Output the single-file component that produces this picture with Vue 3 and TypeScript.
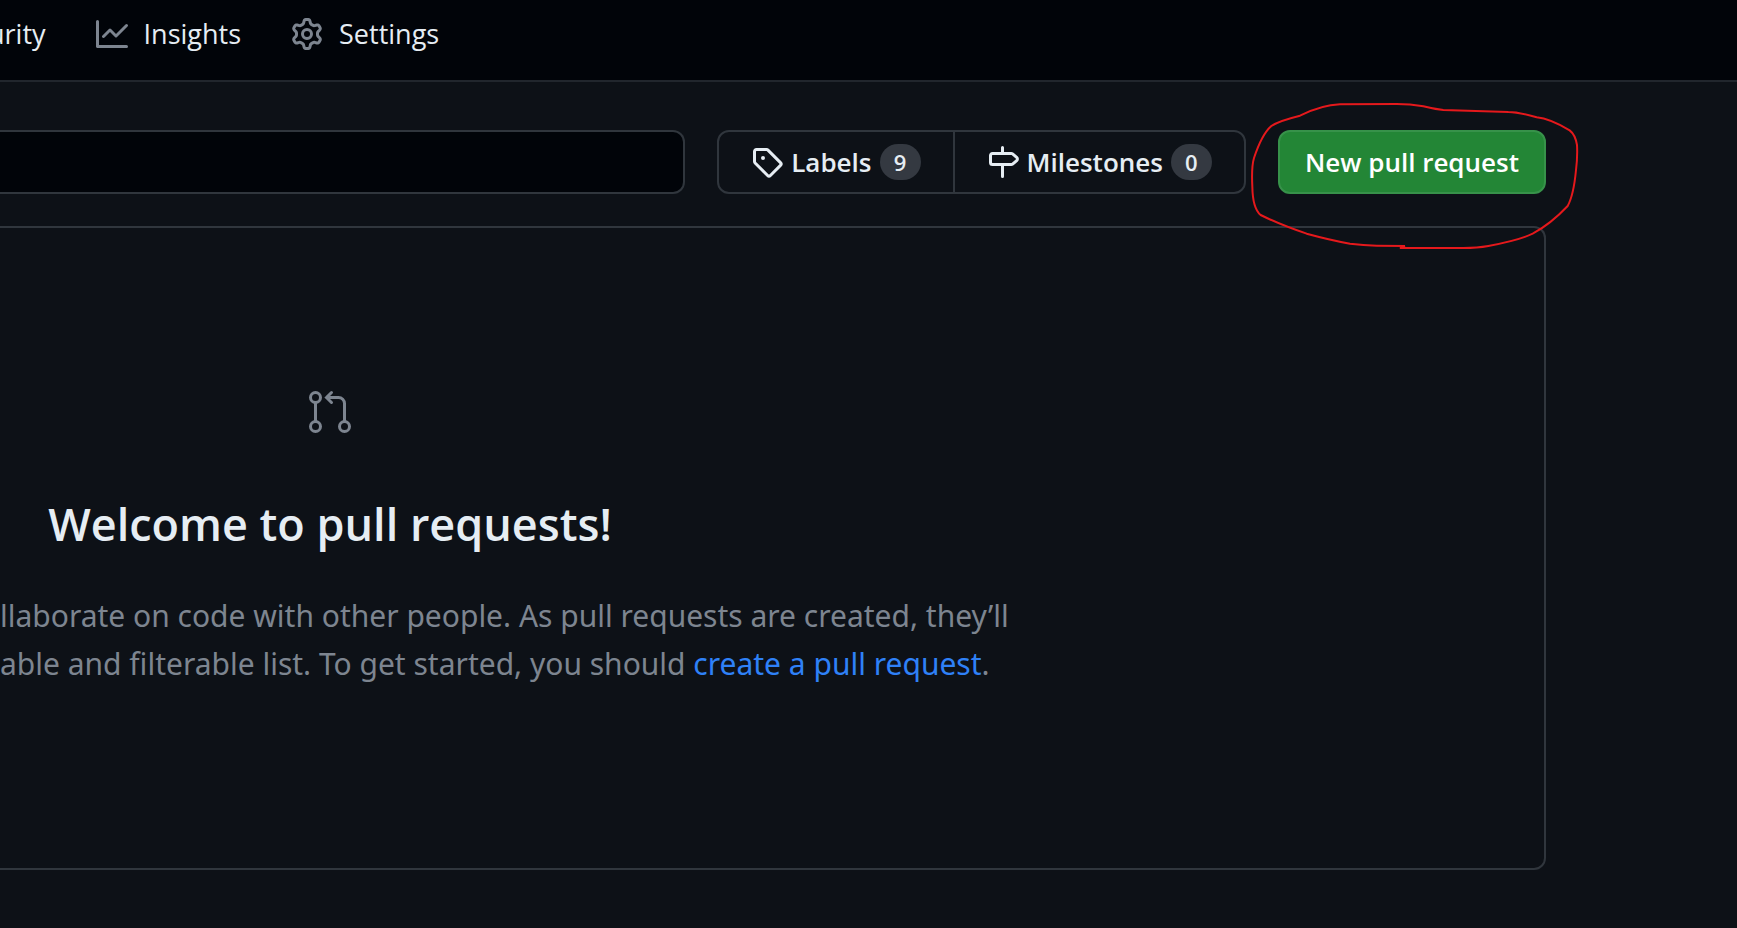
<script setup lang="ts">
import { ref } from 'vue'

interface NavItem {
  label: string
  icon?: string
}

interface Filter {
  label: string
  count: number
  icon: string
}

const graphIcon =
  'M1.5 1.75a.75.75 0 00-1.5 0v12.5c0 .414.336.75.75.75h14.5a.75.75 0 000-1.5H1.5V1.75zm14.28 2.53a.75.75 0 00-1.06-1.06L10 7.94 7.53 5.47a.75.75 0 00-1.06 0L3.22 8.72a.75.75 0 001.06 1.06L7 7.06l2.47 2.47a.75.75 0 001.06 0l5.25-5.25z'
const gearIcon =
  'M7.429 1.525a6.593 6.593 0 011.142 0c.036.003.108.036.137.146l.289 1.105c.147.56.55.967.997 1.189.174.086.341.183.501.29.417.278.97.423 1.53.27l1.102-.303c.11-.03.175.016.195.046.219.31.41.641.573.989.014.031.022.11-.059.19l-.815.806c-.411.406-.562.957-.53 1.456a4.588 4.588 0 010 .582c-.032.499.119 1.05.53 1.456l.815.806c.08.08.073.159.059.19a6.494 6.494 0 01-.573.99c-.02.029-.086.074-.195.045l-1.103-.303c-.559-.153-1.112-.008-1.529.27-.16.107-.327.204-.5.29-.449.222-.851.628-.998 1.189l-.289 1.105c-.029.11-.101.143-.137.146a6.613 6.613 0 01-1.142 0c-.036-.003-.108-.037-.137-.146l-.289-1.105c-.147-.56-.55-.967-.997-1.189a4.502 4.502 0 01-.501-.29c-.417-.278-.97-.423-1.53-.27l-1.102.303c-.11.03-.175-.016-.195-.046a6.492 6.492 0 01-.573-.989c-.014-.031-.022-.11.059-.19l.815-.806c.411-.406.562-.957.53-1.456a4.587 4.587 0 010-.582c.032-.499-.119-1.05-.53-1.456l-.815-.806c-.08-.08-.073-.159-.059-.19a6.44 6.44 0 01.573-.99c.02-.029.086-.075.195-.045l1.103.303c.559.153 1.112.008 1.529-.27.16-.107.327-.204.5-.29.449-.222.851-.628.998-1.189l.289-1.105c.029-.11.101-.143.137-.146zM8 0c-.236 0-.47.01-.701.03-.743.065-1.29.615-1.458 1.261l-.29 1.106c-.017.066-.078.158-.211.224a5.994 5.994 0 00-.668.386c-.123.082-.233.09-.3.071L3.27 2.776c-.644-.177-1.392.02-1.82.63a7.977 7.977 0 00-.704 1.217c-.315.675-.111 1.422.363 1.891l.815.806c.05.048.098.147.088.294a6.084 6.084 0 000 .772c.01.147-.038.246-.088.294l-.815.806c-.474.469-.678 1.216-.363 1.891.2.428.436.835.704 1.218.428.609 1.176.806 1.82.63l1.103-.303c.066-.019.176-.011.299.071.213.143.436.272.668.386.133.066.194.158.212.224l.289 1.106c.169.646.715 1.196 1.458 1.26a8.094 8.094 0 001.402 0c.743-.064 1.29-.614 1.458-1.26l.29-1.106c.017-.066.078-.158.211-.224a5.98 5.98 0 00.668-.386c.123-.082.233-.09.3-.071l1.102.302c.644.177 1.392-.02 1.82-.63.268-.382.505-.789.704-1.217.315-.675.111-1.422-.364-1.891l-.814-.806c-.05-.048-.098-.147-.088-.294a6.1 6.1 0 000-.772c-.01-.147.039-.246.088-.294l.814-.806c.475-.469.679-1.216.364-1.891a7.992 7.992 0 00-.704-1.218c-.428-.609-1.176-.806-1.82-.63l-1.103.303c-.066.019-.176.011-.299-.071a5.991 5.991 0 00-.668-.386c-.133-.066-.194-.158-.212-.224L10.16 1.29C9.99.645 9.444.095 8.701.031A8.094 8.094 0 008 0zm1.5 8a1.5 1.5 0 11-3 0 1.5 1.5 0 013 0zM11 8a3 3 0 11-6 0 3 3 0 016 0z'
const tagIcon =
  'M2.5 7.775V2.75a.25.25 0 01.25-.25h5.025a.25.25 0 01.177.073l6.25 6.25a.25.25 0 010 .354l-5.025 5.025a.25.25 0 01-.354 0l-6.25-6.25a.25.25 0 01-.073-.177zm-1.5 0V2.75C1 1.784 1.784 1 2.75 1h5.025c.464 0 .91.184 1.238.513l6.25 6.25a1.75 1.75 0 010 2.474l-5.026 5.026a1.75 1.75 0 01-2.474 0l-6.25-6.25A1.75 1.75 0 011 7.775zM6 5a1 1 0 100 2 1 1 0 000-2z'
const milestoneIcon =
  'M7.75 0a.75.75 0 01.75.75V3h3.634c.414 0 .814.147 1.13.414l2.07 1.75a1.75 1.75 0 010 2.672l-2.07 1.75a1.75 1.75 0 01-1.13.414H8.5v5.25a.75.75 0 11-1.5 0V10H2.75A1.75 1.75 0 011 8.25v-3.5C1 3.784 1.784 3 2.75 3H7V.75A.75.75 0 017.75 0zm0 8.5h4.384a.25.25 0 00.161-.06l2.07-1.75a.25.25 0 000-.38l-2.07-1.75a.25.25 0 00-.161-.06H2.75a.25.25 0 00-.25.25v3.5c0 .138.112.25.25.25h5z'

const navItems: NavItem[] = [
  { label: 'urity' },
  { label: 'Insights', icon: graphIcon },
  { label: 'Settings', icon: gearIcon },
]

const filters: Filter[] = [
  { label: 'Labels', count: 9, icon: tagIcon },
  { label: 'Milestones', count: 0, icon: milestoneIcon },
]

const query = ref('')
</script>

<template>
  <div class="page">
    <header class="header">
      <nav class="nav" aria-label="Repository">
        <a v-for="item in navItems" :key="item.label" class="nav-link" href="#">
          <svg v-if="item.icon" class="icon muted" viewBox="0 0 16 16" aria-hidden="true">
            <path fill-rule="evenodd" :d="item.icon" />
          </svg>
          <span>{{ item.label }}</span>
        </a>
      </nav>
    </header>

    <main class="main">
      <div class="toolbar">
        <input v-model="query" class="search" type="text" aria-label="Search all issues" />
        <div class="filters">
          <a v-for="filter in filters" :key="filter.label" class="filter" href="#">
            <svg class="icon" viewBox="0 0 16 16" aria-hidden="true">
              <path fill-rule="evenodd" :d="filter.icon" />
            </svg>
            <span>{{ filter.label }}</span>
            <span class="count">{{ filter.count }}</span>
          </a>
        </div>
        <div class="create">
          <button class="create-button" type="button">New pull request</button>
          <svg class="scribble" viewBox="0 0 1110 510" aria-hidden="true">
            <path
              d="M525 468 L512 474 L700 474 Q742 474 775 468 Q870 450 908 431 Q962 402 1013 348 Q1031 315 1038 240 Q1043 200 1041 165 Q1036 134 1019 121 Q960 86 920 82 Q865 66 835 66 L640 60 Q610 57 580 49 Q540 42 500 42 L330 43 Q275 45 210 77 Q145 93 124 108 Q96 132 72 204 Q64 230 67 290 Q68 355 92 375 Q150 404 230 431 Q300 450 360 461 Q400 466 440 467 L525 468"
            />
          </svg>
        </div>
      </div>

      <section class="blankslate">
        <div class="intro">
          <svg class="pull-icon" viewBox="0 0 24 24" aria-hidden="true">
            <circle cx="4.75" cy="4.75" r="2.5" />
            <circle cx="4.75" cy="19.25" r="2.5" />
            <circle cx="19.25" cy="19.25" r="2.5" />
            <path d="M4.75 7.25v9.5M19.25 16.75V7.75a3 3 0 0 0-3-3h-6M12.75 2.25l-2.5 2.5 2.5 2.5" />
          </svg>
          <h1 class="title">Welcome to pull requests!</h1>
        </div>
        <p class="description">
          llaborate on code with other people. As pull requests are created, they’ll<br />
          able and filterable list. To get started, you should
          <a class="link" href="#">create a pull request</a>.
        </p>
      </section>
    </main>
  </div>
</template>

<style>
body {
  margin: 0;
  background: #0d1117;
}
</style>

<style scoped>
.page {
  min-height: 100vh;
  overflow: hidden;
  background: #0d1117;
  color: #e6edf3;
  font-family: 'Open Sans', 'Noto Sans', sans-serif;
  font-size: 26px;
  line-height: 40px;
}

.header {
  padding: 14px 0 26px;
  border-bottom: 2px solid #21262d;
  background: #010409;
}

.nav {
  display: flex;
  gap: 50px;
  margin-left: -12px;
  font-size: 27px;
}

.nav-link {
  display: flex;
  align-items: center;
  gap: 16px;
  color: inherit;
  text-decoration: none;
}

.icon {
  flex: none;
  width: 32px;
  height: 32px;
  fill: currentColor;
}

.muted {
  color: #7d8590;
}

.main {
  padding: 48px 191px 59px 0;
}

.toolbar {
  display: flex;
  gap: 32px;
  margin-bottom: 32px;
}

.search {
  flex: 1;
  min-width: 0;
  box-sizing: border-box;
  height: 64px;
  padding: 0 24px;
  border: 2px solid #30363d;
  border-left: 0;
  border-radius: 0 12px 12px 0;
  background: #010409;
  color: inherit;
  font: inherit;
}

.filters {
  display: flex;
  box-sizing: border-box;
  height: 64px;
  border: 2px solid #30363d;
  border-radius: 12px;
  font-weight: 600;
}

.filter {
  display: flex;
  align-items: center;
  gap: 8px;
  padding: 0 32px;
  color: inherit;
  text-decoration: none;
}

.filter + .filter {
  border-left: 2px solid #30363d;
}

.count {
  min-width: 41px;
  border-radius: 18px;
  background: #343941;
  font-size: 22px;
  line-height: 36px;
  text-align: center;
}

.create {
  position: relative;
}

.create-button {
  height: 64px;
  padding: 0 25px;
  border: 2px solid #37924a;
  border-radius: 12px;
  background: #238636;
  color: #fff;
  font: inherit;
  font-weight: 600;
}

.scribble {
  position: absolute;
  top: -40px;
  left: -48px;
  width: 370px;
  height: 170px;
  fill: none;
  stroke: #e5191c;
  stroke-width: 6;
  stroke-linejoin: round;
  pointer-events: none;
}

.blankslate {
  padding: 160px 0 180px;
  border: 2px solid #30363d;
  border-left: 0;
  border-radius: 0 12px 12px 0;
}

.intro {
  display: flex;
  flex-direction: column;
  align-items: center;
  width: 660px;
}

.pull-icon {
  width: 48px;
  height: 48px;
  fill: none;
  stroke: #7d8590;
  stroke-width: 1.5;
  stroke-linecap: round;
}

.title {
  margin: 52px 0 32px;
  font-size: 45px;
  font-weight: 600;
  line-height: 72px;
}

.description {
  margin: 0;
  color: #7d8590;
  font-family: 'Noto Sans', 'Open Sans', sans-serif;
  font-size: 30px;
  line-height: 48px;
  white-space: nowrap;
}

.link {
  color: #2f81f7;
  text-decoration: none;
}
</style>
